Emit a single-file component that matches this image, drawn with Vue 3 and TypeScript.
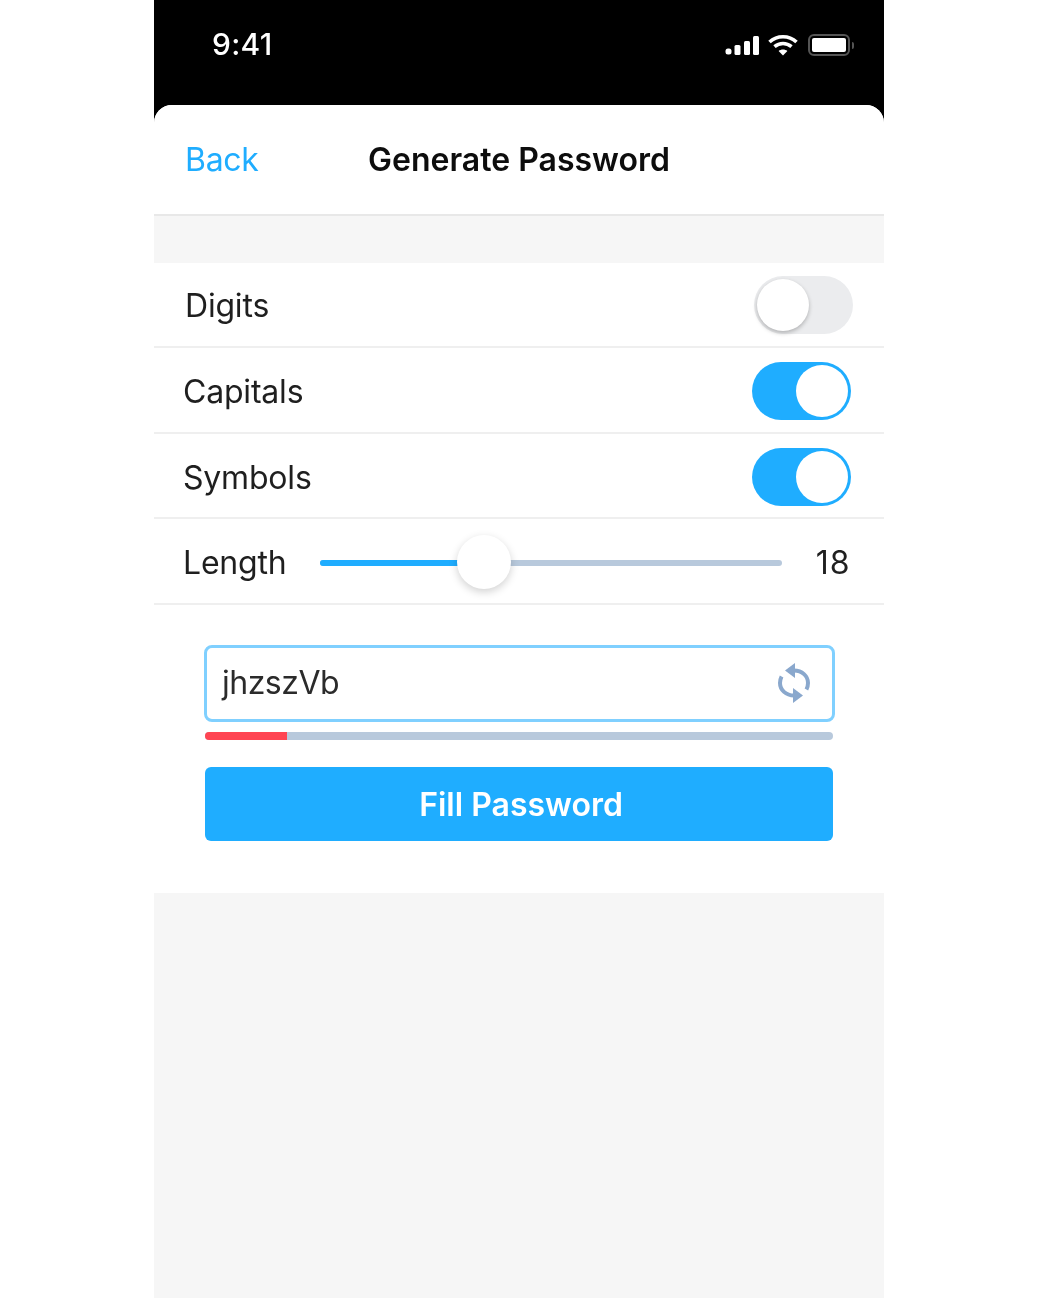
<script setup lang="ts">
interface Row { label: string; on: boolean; shift: boolean }
const rows: Row[] = [
  { label: 'Digits', on: false, shift: true },
  { label: 'Capitals', on: true, shift: false },
  { label: 'Symbols', on: true, shift: false },
]
</script>

<template>
  <div class="page">
    <div class="phone">
      <div class="status">
        <span class="time">9:41</span>
        <div class="status-icons">
          <svg width="35" height="20" viewBox="0 0 35 20" fill="#fff">
            <rect x="0.5" y="13.5" width="6" height="6" rx="2.5" />
            <rect x="9.5" y="10" width="6" height="10" rx="1.5" />
            <rect x="19" y="6" width="6" height="14" rx="1.5" />
            <rect x="28" y="1" width="6" height="19" rx="1.5" />
          </svg>
          <svg width="30" height="22" viewBox="0 0 30 22" fill="none" stroke="#fff" stroke-width="3.6">
            <path d="M1.5 8 C9 1 21 1 28.5 8" />
            <path d="M6.5 12.6 C11.5 8.4 18.5 8.4 23.5 12.6" />
            <path d="M15 21.5 L10.6 17 C13 15 17 15 19.4 17 Z" fill="#fff" stroke="none" />
          </svg>
          <div class="battery"><div class="battery-fill"></div></div>
          <div class="battery-cap"></div>
        </div>
      </div>

      <div class="sheet">
        <header class="nav">
          <span class="back">Back</span>
          <h1 class="title">Generate Password</h1>
        </header>
        <div class="gap"></div>

        <div v-for="row in rows" :key="row.label" class="row" :class="{ shift: row.shift }">
          <span class="label">{{ row.label }}</span>
          <span class="toggle" :class="{ on: row.on }"><span class="knob"></span></span>
        </div>

        <div class="row slider-row">
          <span class="label">Length</span>
          <div class="slider">
            <div class="fill"></div>
            <div class="thumb"></div>
          </div>
          <span class="value">18</span>
        </div>

        <div class="form">
          <div class="input">
            <span class="pw">jhzszVb</span>
            <svg class="sync" width="34" height="42" viewBox="0 0 34 42" fill="none" stroke="#8aa8cd" stroke-width="4">
              <path d="M17 8.5 C25 8.5 31 14 31 21 C31 23.5 30.4 25.6 29.4 27.5" />
              <path d="M17 33.5 C9 33.5 3 28 3 21 C3 18.5 3.6 16.4 4.6 14.5" />
              <path d="M18 1 L18 16 L8 8.5 Z" fill="#8aa8cd" stroke="none" />
              <path d="M16 26 L16 41 L26 33.5 Z" fill="#8aa8cd" stroke="none" />
            </svg>
          </div>
          <div class="strength"><div class="strength-fill"></div></div>
          <button class="fill-btn" type="button">Fill Password</button>
        </div>

        <div class="rest"></div>
      </div>
    </div>
  </div>
</template>

<style>
html, body { margin: 0; background: #fff; }
</style>

<style scoped>
.page {
  width: 1040px;
  height: 1300px;
  background: #fff;
  display: flex;
  justify-content: flex-start;
  padding-left: 154px;
  box-sizing: border-box;
  font-family: Inter, "Noto Sans", sans-serif;
  overflow: hidden;
}
.phone {
  width: 730px;
  height: 1298px;
  background: #000;
  display: flex;
  flex-direction: column;
  filter: blur(0.45px);
}
.status {
  height: 105px;
  flex: none;
  display: flex;
  justify-content: space-between;
  padding: 26px 30px 0 58px;
  box-sizing: border-box;
}
.time {
  color: #fff;
  font-size: 30px;
  font-weight: 500;
  line-height: 36px;
  letter-spacing: 0.3px;
}
.status-icons {
  display: flex;
  align-items: center;
  height: 38px;
  gap: 0;
}
.status-icons svg:nth-child(2) { margin: 0 10px 0 8px; }
.battery {
  width: 42px;
  height: 22px;
  border: 2px solid #555;
  border-radius: 6px;
  padding: 2px;
  box-sizing: border-box;
}
.battery-fill { width: 100%; height: 100%; background: #fff; border-radius: 2px; }
.battery-cap { width: 2px; height: 7px; margin-left: 2px; background: #555; border-radius: 0 2px 2px 0; }
.sheet {
  flex: 1;
  background: #f6f6f6;
  border-radius: 18px 18px 0 0;
  display: flex;
  flex-direction: column;
  overflow: hidden;
}
.nav {
  height: 110.5px;
  flex: none;
  background: #fff;
  border-bottom: 2px solid #e8e8e8;
  box-sizing: border-box;
  padding-top: 1.5px;
  position: relative;
  display: flex;
  align-items: center;
  justify-content: center;
}
.back {
  position: absolute;
  left: 31px;
  top: 36px;
  line-height: 38px;
  color: #1fadff;
  font-size: 32px;
  letter-spacing: -0.3px;
}
.title {
  margin: 0;
  color: #0d0d0d;
  font-size: 32px;
  font-weight: 600;
  line-height: 38px;
}
.gap { height: 47px; flex: none; }
.row {
  height: 85.67px;
  flex: none;
  background: #fff;
  border-bottom: 2px solid #efefef;
  box-sizing: border-box;
  display: flex;
  align-items: center;
  justify-content: space-between;
  padding: 2px 33.5px 0 29px;
}
.row.shift { padding: 2px 31.5px 0 31px; }
.label, .value {
  font-size: 32px;
  color: #1f1f1f;
  line-height: 38px;
  padding-top: 2px;
}
.label { letter-spacing: -0.2px; }
.value { letter-spacing: 1px; margin-left: auto; }
.toggle {
  width: 99px;
  height: 58px;
  border-radius: 29px;
  background: #ebecee;
  position: relative;
  display: block;
}
.toggle.on { background: #1fadff; }
.knob {
  position: absolute;
  left: 3px;
  top: 3px;
  width: 52px;
  height: 52px;
  border-radius: 50%;
  background: #fff;
  box-shadow: 0 2px 4px rgba(0, 0, 0, 0.25);
}
.toggle.on .knob { left: 44.5px; box-shadow: none; }
.slider-row { gap: 0; padding-right: 33.5px; }
.slider {
  width: 462px;
  height: 6px;
  margin: 2px 0 0 34px;
  background: #b8c9dc;
  border-radius: 3px;
  position: relative;
  flex: none;
}
.fill {
  width: 164px;
  height: 100%;
  background: #1fadff;
  border-radius: 3px 0 0 3px;
}
.thumb {
  position: absolute;
  left: 137px;
  top: -25px;
  width: 54px;
  height: 54px;
  border-radius: 50%;
  background: #fff;
  box-shadow: 0 3px 8px rgba(0, 0, 0, 0.18);
}
.form {
  background: #fff;
  height: 288.3px;
  flex: none;
  padding: 39.8px 51px 0;
  box-sizing: border-box;
  display: flex;
  flex-direction: column;
}
.input {
  height: 77px;
  flex: none;
  margin: 0 -1.5px;
  border: 3px solid #80d0ff;
  border-radius: 8px;
  box-sizing: border-box;
  display: flex;
  align-items: center;
  justify-content: space-between;
  padding: 0 20.5px 0 15.5px;
}
.pw { font-size: 32px; color: #2b2b2b; line-height: 38px; letter-spacing: -0.5px; }
.sync { flex: none; }
.strength {
  height: 8px;
  flex: none;
  margin-top: 10.5px;
  background: #b8c9dc;
  border-radius: 4px;
  overflow: hidden;
}
.strength-fill { width: 82px; height: 100%; background: #ff4553; }
.fill-btn {
  height: 74px;
  flex: none;
  margin-top: 27px;
  padding: 0 0 0 4px;
  border: 0;
  border-radius: 6px;
  background: #1fadff;
  color: #fff;
  font-family: inherit;
  font-size: 32px;
  font-weight: 600;
}
.rest { flex: 1; }
</style>
